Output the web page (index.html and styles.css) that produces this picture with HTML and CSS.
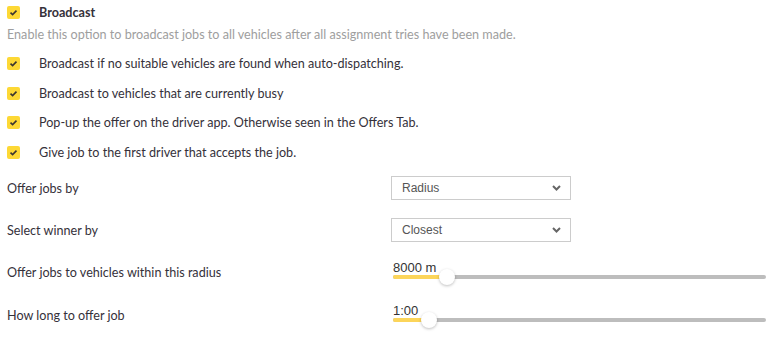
FILE: index.html
```html
<!DOCTYPE html>
<html lang="en">
<head>
  <meta charset="UTF-8">
  <meta name="viewport" content="width=device-width, initial-scale=1.0">
  <title>Broadcast settings</title>
  <link rel="stylesheet" href="styles.css">
</head>
<body>
  <div class="settings">
    <label class="option head">
      <span class="check"><svg viewBox="0 0 13 13" width="13" height="13"><path d="M3.5 6.6 L5.6 8.6 L9.5 4.6" /></svg></span>
      <span class="option-text">Broadcast</span>
    </label>
    <p class="desc">Enable this option to broadcast jobs to all vehicles after all assignment tries have been made.</p>

    <div class="options">
      <label class="option">
        <span class="check"><svg viewBox="0 0 13 13" width="13" height="13"><path d="M3.5 6.6 L5.6 8.6 L9.5 4.6" /></svg></span>
        <span class="option-text">Broadcast if no suitable vehicles are found when auto-dispatching.</span>
      </label>
      <label class="option">
        <span class="check"><svg viewBox="0 0 13 13" width="13" height="13"><path d="M3.5 6.6 L5.6 8.6 L9.5 4.6" /></svg></span>
        <span class="option-text">Broadcast to vehicles that are currently busy</span>
      </label>
      <label class="option">
        <span class="check"><svg viewBox="0 0 13 13" width="13" height="13"><path d="M3.5 6.6 L5.6 8.6 L9.5 4.6" /></svg></span>
        <span class="option-text">Pop-up the offer on the driver app. Otherwise seen in the Offers Tab.</span>
      </label>
      <label class="option">
        <span class="check"><svg viewBox="0 0 13 13" width="13" height="13"><path d="M3.5 6.6 L5.6 8.6 L9.5 4.6" /></svg></span>
        <span class="option-text">Give job to the first driver that accepts the job.</span>
      </label>
    </div>

    <div class="field select-row">
      <span class="field-label">Offer jobs by</span>
      <div class="select">
        <span>Radius</span>
        <svg class="chevron" viewBox="0 0 9 6" width="9" height="6"><path d="M1 1 L4.5 4.5 L8 1" /></svg>
      </div>
    </div>
    <div class="field select-row">
      <span class="field-label">Select winner by</span>
      <div class="select">
        <span>Closest</span>
        <svg class="chevron" viewBox="0 0 9 6" width="9" height="6"><path d="M1 1 L4.5 4.5 L8 1" /></svg>
      </div>
    </div>

    <div class="field slider-row">
      <span class="field-label">Offer jobs to vehicles within this radius</span>
      <div class="slider">
        <span class="slider-value">8000 m</span>
        <div class="track">
          <div class="fill" style="width: 14.5%"></div>
          <div class="thumb" style="left: 14.5%"></div>
        </div>
      </div>
    </div>
    <div class="field slider-row">
      <span class="field-label">How long to offer job</span>
      <div class="slider">
        <span class="slider-value">1:00</span>
        <div class="track">
          <div class="fill" style="width: 9.7%"></div>
          <div class="thumb" style="left: 9.7%"></div>
        </div>
      </div>
    </div>
  </div>
</body>
</html>
```

FILE: styles.css
```css
body {
  margin: 0;
  background: #fff;
  font-family: Lato, "Noto Sans", sans-serif;
  font-size: 12.6px;
  color: #35313a;
}
.settings {
  padding: 0 7px;
  width: 759px;
}
.option {
  display: flex;
  align-items: center;
  height: 29.5px;
}
.option.head {
  height: 25px;
  font-weight: bold;
}
.check {
  width: 13px;
  height: 13px;
  border-radius: 2px;
  background: #fdd835;
  display: flex;
  flex-shrink: 0;
}
.check path {
  fill: none;
  stroke: #3b3530;
  stroke-width: 1.6;
}
.option-text {
  margin-left: 19px;
}
.desc {
  margin: 0;
  height: 19px;
  line-height: 19px;
  color: #9e9e9e;
}
.options {
  padding-top: 5px;
}
.field {
  display: grid;
  grid-template-columns: 384px 1fr;
  align-items: center;
}
.select-row {
  height: 42px;
}
.slider-row {
  height: 43px;
}
.select {
  width: 180px;
  height: 24px;
  box-sizing: border-box;
  border: 1px solid #ccc;
  display: flex;
  align-items: center;
  justify-content: space-between;
  padding: 0 9px 0 10px;
  font-family: "Liberation Sans", Arial, sans-serif;
  font-size: 12px;
  color: #555;
}
.chevron path {
  fill: none;
  stroke: #666;
  stroke-width: 2;
}
.slider {
  margin-left: 2px;
  padding-bottom: 6px;
  display: flex;
  flex-direction: column;
}
.slider-value {
  font-family: "Liberation Sans", Arial, sans-serif;
  font-size: 13px;
  line-height: 15px;
  color: #333;
}
.track {
  position: relative;
  height: 4px;
  width: 373px;
  border-radius: 2px;
  background: #bdbdbd;
}
.fill {
  height: 4px;
  border-radius: 2px 0 0 2px;
  background: #fcd55a;
}
.thumb {
  position: absolute;
  top: -6px;
  width: 16px;
  height: 16px;
  margin-left: -8px;
  border-radius: 50%;
  background: #fff;
  box-shadow: 0 1px 3px rgba(0, 0, 0, 0.25);
}
```
